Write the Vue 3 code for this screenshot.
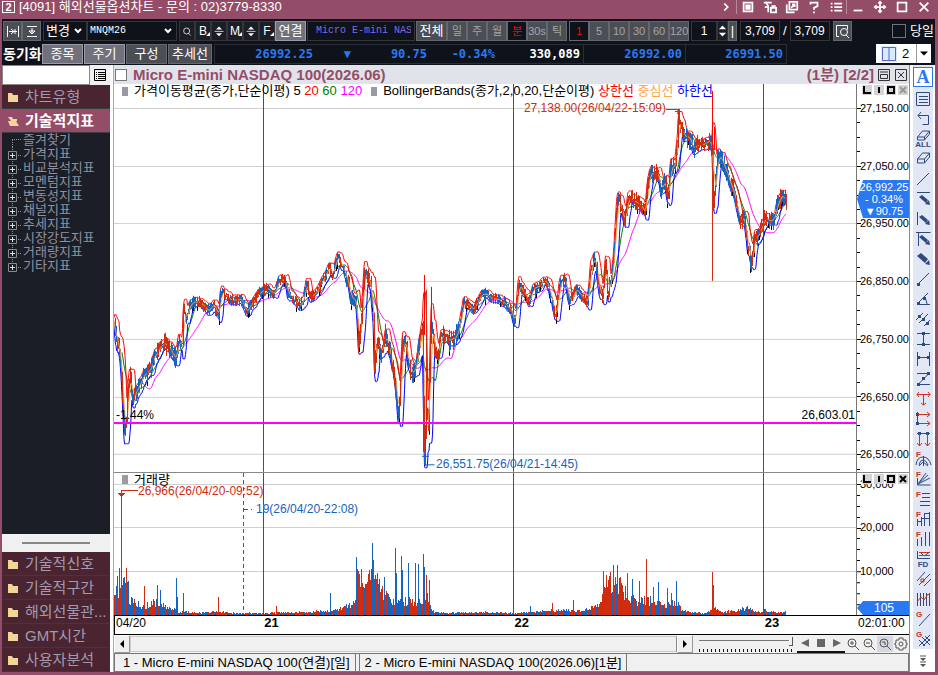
<template>
  <div class="app">
    <header class="titlebar">
      <span class="badge">2</span>
      <h1>[4091] 해외선물옵션차트 - 문의 : 02)3779-8330</h1>
      <div class="window-tools">
        <button v-for="w in windowTools" :key="w.name" :class="{ sep: w.sep }" :aria-label="w.name">
          <svg viewBox="0 0 16 16"><path :d="w.d" /></svg>
        </button>
      </div>
    </header>

    <div class="toolbar">
      <button class="btn w19" aria-label="좁게"><svg viewBox="0 0 16 16"><path d="M2.5 3v11M13.5 3v11M4 8.500h8M6 6l3 2.500l-3 2.500M10 6v5" /></svg></button>
      <button class="btn w19 gap" aria-label="맞춤"><svg viewBox="0 0 16 16"><path d="M3 3.500h10M3 13.500h10M8 5v5M5 8h6l-3 3z" /></svg></button>
      <div class="pick w44">
        <select aria-label="변경"><option>변경</option></select>
        <svg viewBox="0 0 8 6"><path d="M1 1l3 3l3-3" /></svg>
      </div>
      <div class="pick w90 mono gap">
        <select aria-label="종목코드"><option>MNQM26</option></select>
        <svg viewBox="0 0 8 6"><path d="M1 1l3 3l3-3" /></svg>
      </div>
      <button class="dark w16" aria-label="검색"><svg viewBox="0 0 16 16"><path d="M11.500 8a4 4 0 1 1-8 0a4 4 0 1 1 8 0M10 11l3 3" /></svg></button>
      <template v-for="k in ['B', 'M', 'F']" :key="k">
        <button class="dark w16 key">{{ k }}<i></i></button>
        <button v-if="k !== 'F'" class="dark w16" :aria-label="k + ' 조절'"><svg viewBox="0 0 16 16"><path d="M2 8.500h12" /><path class="fill" d="M4 6l4-4l4 4zM4 11l4 4l4-4z" /></svg></button>
      </template>
      <button class="btn on w31">연결</button>
      <input class="name mono" aria-label="종목명" value="Micro E-mini NASDAQ 100(2026.06)" />
      <button class="btn w31 bright">전체</button>
      <div class="group">
        <button v-for="p in periods" :key="p" :class="{ active: p === '분' }">{{ p }}</button>
      </div>
      <div class="group">
        <button v-for="m in minutes" :key="m" :class="{ active: m === 1 }">{{ m }}</button>
      </div>
      <input class="num w26" aria-label="주기 값" value="1" />
      <button class="dark w11" aria-label="증감"><svg viewBox="0 0 10 16"><path class="fill" d="M1 6l4-4l4 4zM1 10l4 4l4-4z" /></svg></button>
      <button class="btn w9">|</button>
      <input class="num w40" aria-label="표시 개수" value="3,709" />
      <span class="slash">/</span>
      <input class="num w40" aria-label="전체 개수" value="3,709" />
      <button class="btn w19" aria-label="데이터 조회"><svg viewBox="0 0 16 16"><path d="M5 13.500h-2.500v-11h11v4M13.500 9a3.500 3.500 0 1 1-7 0a3.500 3.500 0 1 1 7 0M12 12l3 3" /></svg></button>
      <label class="today"><input type="checkbox" />당일</label>
    </div>

    <div class="toolbar second">
      <strong class="sync">동기화</strong>
      <button class="btn on w41">종목</button>
      <button class="btn on w41">주기</button>
      <button class="btn w41">구성</button>
      <button class="btn w44">추세선</button>
      <div class="quotes">
        <span class="q1">26992.25</span>
        <span class="q2">▼</span>
        <span class="q3">90.75</span>
        <span class="q4">-0.34%</span>
        <span class="q5">330,089</span>
        <span class="q6">26992.00</span>
        <span class="q6">26991.50</span>
      </div>
      <div class="layout-pick">
        <svg class="grid-icon" viewBox="0 0 16 16"><path d="M1.500 1.500h13v13h-13zM8 2v12" /></svg>
        <select aria-label="화면 분할"><option>2</option></select>
        <svg class="arrow" viewBox="0 0 8 6"><path d="M0 1h8l-4 4z" /></svg>
      </div>
    </div>

    <main class="body">
      <aside class="sidebar">
        <div class="search">
          <input aria-label="지표 검색" />
          <button aria-label="목록"><svg viewBox="0 0 14 14"><path d="M1.500 1.500h11v11h-11z" /><path stroke-dasharray="1 1 7 9" d="M3 4.500h9M3 6.500h9M3 8.500h9M3 10.500h9" /></svg></button>
        </div>
        <button class="section">
          <svg viewBox="0 0 12 10"><path d="M1 1h4l1 2h5v7h-10z" /></svg>차트유형
        </button>
        <button class="section open">
          <svg viewBox="0 0 12 10"><path d="M1 1h4l1 2h4v2h-6zM1 5h8l3 5h-9z" /></svg>기술적지표
        </button>
        <ul class="tree">
          <li v-for="(t, i) in indicators" :key="t">
            <svg viewBox="0 0 18 14">
              <path class="dots" :d="i === 0 ? 'M7.500 7v7M7 6.500h9' : i === indicators.length - 1 ? 'M7.500 0v3M13 8.500h3' : 'M7.500 0v14M13 8.500h3'" />
              <g v-if="i > 0"><path class="node" d="M3.500 4.500h8v8h-8z" /><path class="plus" d="M5 8.500h5M7.500 6v5" /></g>
            </svg>
            <a href="#">{{ t }}</a>
          </li>
        </ul>
        <div class="splitter"></div>
        <button v-for="s in sections" :key="s" class="section">
          <svg viewBox="0 0 12 10"><path d="M1 1h4l1 2h5v7h-10z" /></svg>{{ s }}
        </button>
      </aside>

      <section class="chart">
        <div class="chart-head">
          <input type="checkbox" aria-label="차트 선택" />
          <h2>Micro E-mini NASDAQ 100(2026.06)</h2>
          <span>(1분) [2/2]</span>
          <button aria-label="창 크기"><svg viewBox="0 0 14 14"><path d="M1.500 1.500h11v11h-11zM3 4h8M3.500 6.500h7v4h-7z" /></svg></button>
          <button aria-label="닫기"><svg viewBox="0 0 14 14"><path d="M1.500 1.500h11v11h-11zM4 4l6 6M10 4l-6 6" /></svg></button>
        </div>

        <div class="pane price">
          <div class="plot">
            <svg viewBox="114 84 742 388" preserveAspectRatio="none">
              <path class="grid" :d="hLines(priceTicks)" />
              <path class="session" d="M263.500 84v388M513.500 84v388M763.500 84v388" />
              <path class="ma120" :d="ma120" />
              <path class="ma60" :d="ma60" />
              <path class="black" :d="candles.wick" />
              <path class="lower" :d="bands.lower" />
              <path class="upper" :d="bands.upper" />
              <path class="up" :d="candles.up" />
              <path class="down" :d="candles.down" />
              <path class="middle" :d="bands.middle" />
              <path class="up" :d="candles.front" />
              <path class="upper" d="M424.500 335v-60M431.500 330v-43M712.500 150V91M714.500 150v-23" />
              <path class="level" d="M114 423h742" />
              <path class="up" d="M666 109.500h12v4M675 111.500h7M677 113.500h3" />
              <path class="down" d="M422 456.500h7M424.500 457v8h10" />
            </svg>
            <div class="legend">
              <i></i><span>가격이동평균(종가,단순이평) 5 <b class="c-red">20</b> <b class="c-green">60</b> <b class="c-pink">120</b></span>
              <i></i><span>BollingerBands(종가,2,0,20,단순이평) <b class="c-red">상한선</b> <b class="c-orange">중심선</b> <b class="c-blue">하한선</b></span>
            </div>
            <span class="note red end" :style="at(666, 108)">27,138.00(26/04/22-15:09)</span>
            <span class="note blue" :style="at(436, 464)">26,551.75(26/04/21-14:45)</span>
            <span class="note" :style="at(116, 415)">-1.44%</span>
            <span class="note end" :style="at(855, 415)">26,603.01</span>
          </div>
          <div class="axis">
            <svg viewBox="0 84 53 388" preserveAspectRatio="none"><path :d="priceMarks" /></svg>
            <span v-for="t in priceTicks" :key="t.label" :style="{ top: ((t.y - 84) / 388) * 100 + '%' }">{{ t.label }}</span>
            <div class="last" :style="{ top: ((199 - 84) / 388) * 100 + '%' }">26,992.25<br />- 0.34%<br />▼90.75</div>
            <div class="pane-tools">
              <button v-for="b in paneTools" :key="b.name" :aria-label="b.name"><svg viewBox="0 0 10 10"><path :d="b.d" :class="{ faded: b.name === '삭제' }" /></svg></button>
            </div>
          </div>
        </div>

        <div class="pane volume">
          <div class="plot">
            <svg viewBox="114 473 742 142" preserveAspectRatio="none">
              <path class="grid" :d="hLines(volumeTicks)" />
              <path class="down" stroke-dasharray="4 3" d="M243.500 473v142M244 509.500h8" />
              <path class="down" :d="volumes.down" />
              <path class="up" :d="volumes.up" />
              <path class="session" d="M263.500 473v142M513.500 473v142M763.500 473v142" />
              <path class="up" d="M121.500 494v-4h16M118 493.500h7M119 494.500h5M120 495.500h3" />
            </svg>
            <div class="legend"><i></i><span>거래량</span></div>
            <span class="note red" :style="atVol(138, 491)">26,966(26/04/20-09:52)</span>
            <span class="note blue" :style="atVol(256, 509)">19(26/04/20-22:08)</span>
          </div>
          <div class="axis">
            <svg viewBox="0 473 53 142" preserveAspectRatio="none"><path :d="volumeMarks" /></svg>
            <span v-for="t in volumeTicks" :key="t.label" :style="{ top: ((t.y - 473) / 142) * 100 + '%' }">{{ t.label }}</span>
            <div class="last small" :style="{ top: ((608 - 473) / 142) * 100 + '%' }">105</div>
            <div class="pane-tools">
              <button v-for="b in paneTools" :key="b.name" :aria-label="b.name"><svg viewBox="0 0 10 10"><path :d="b.d" /></svg></button>
            </div>
          </div>
        </div>

        <div class="times">
          <div class="plot">
            <span v-for="d in days" :key="d.label" :class="{ day: d.day }" :style="{ left: ((d.x - 114) / 742) * 100 + '%' }">{{ d.label }}</span>
          </div>
          <span class="clock">02:01:00</span>
        </div>

        <div class="scroll">
          <button class="step" aria-label="이전"><svg viewBox="0 0 8 8"><path d="M6 0v8l-4-4z" /></svg></button>
          <div class="track"></div>
          <button class="step" aria-label="다음"><svg viewBox="0 0 8 8"><path d="M2 0v8l4-4z" /></svg></button>
          <input type="range" aria-label="확대 비율" min="0" max="100" value="100" />
          <div class="play">
            <button aria-label="뒤로"><svg viewBox="0 0 10 10"><path d="M9 1v8l-8-4z" /></svg></button>
            <button aria-label="정지"><svg viewBox="0 0 10 10"><path d="M1 1h8v8h-8z" /></svg></button>
            <button aria-label="앞으로"><svg viewBox="0 0 10 10"><path d="M1 1v8l8-4z" /></svg></button>
          </div>
          <button v-for="z in zooms" :key="z.name" class="zoom" :class="{ held: z.held }" :aria-label="z.name"><svg viewBox="0 0 14 14"><path :d="z.d" /></svg></button>
        </div>

        <nav class="tabs">
          <button>1 - Micro E-mini NASDAQ 100(연결)[일]</button>
          <button class="current">2 - Micro E-mini NASDAQ 100(2026.06)[1분]</button>
        </nav>
      </section>

      <nav class="drawing">
        <button class="text-tool" aria-label="텍스트"><svg viewBox="0 0 20 20"><text x="10" y="17" text-anchor="middle">A</text></svg></button>
        <button v-for="t in tools" :key="t.name" :aria-label="t.name">
          <svg viewBox="0 0 20 20">
            <path v-if="t.d" :d="t.d" />
            <path v-if="t.fill" class="fill" :d="t.fill" />
            <path v-if="t.red" class="red" :d="t.red" />
            <text v-if="t.mark" x="3" y="8">{{ t.mark }}</text>
            <text v-if="t.sub" class="sub" x="10" y="18" text-anchor="middle">{{ t.sub }}</text>
          </svg>
        </button>
        <button class="more" aria-label="더보기"><svg viewBox="0 0 20 20"><path d="M7 5h6M7 11h6" /><path class="fill" d="M7 7h6l-3 3zM7 13h6l-3 3z" /></svg></button>
      </nav>
    </main>
  </div>
</template>

<script setup>
import { computed } from "vue";

const windowTools = [
  { name: "펼치기", sep: true, d: "M6 4l4 4l-4 4" },
  { name: "캡처", d: "M3 3h10v10h-10zM6 6h4v4h-4zM7 8h2" },
  { name: "고정", d: "M1 3h9M3 2l3 5v7M2 8h5M9 9h6v5h-6zM10.500 9v-2h3v2" },
  { name: "새창", d: "M5 2h9v9h-9zM2 5v9h9M7 9l4-4M8 5h3v3" },
  { name: "도움말", d: "M4 5v-2h8v4l-4 2v2M8 13v2" },
  { name: "메뉴", sep: true, d: "M2 4h2M2 8h2M2 12h2M6 4h9M6 8h9M6 12h9" },
  { name: "최소화", d: "M3 12h10" },
  { name: "이동", d: "M8 2v12M2 8h12M6 4l2-2l2 2M6 12l2 2l2-2M4 6l-2 2l2 2M12 6l2 2l-2 2" },
  { name: "최대화", d: "M3 3h10v10h-10z" },
  { name: "닫기", d: "M3 3l10 10M13 3l-10 10" },
];
const periods = ["일", "주", "월", "분", "30s", "틱"];
const minutes = [1, 5, 10, 30, 60, 120];
const indicators = ["즐겨찾기", "가격지표", "비교분석지표", "모멘텀지표", "변동성지표", "채널지표", "추세지표", "시장강도지표", "거래량지표", "기타지표"];
const sections = ["기술적신호", "기술적구간", "해외선물관...", "GMT시간", "사용자분석"];
const paneTools = [
  { name: "최소", d: "M2 1v7h7" },
  { name: "분할", d: "M5 2v6" },
  { name: "최대", d: "M2 2h6v6h-6z" },
  { name: "삭제", d: "M2 2l6 6M8 2l-6 6" },
];
const lens = "M10 6a4 4 0 1 1-8 0a4 4 0 1 1 8 0M9 9l4 4";
const zooms = [
  { name: "확대", d: lens + "M4 6h4M6 4v4" },
  { name: "축소", d: lens + "M4 6h4" },
  { name: "영역", d: lens + "M4 5h3v3", held: true },
  { name: "설정", d: "M9 7a2 2 0 1 1-4 0a2 2 0 1 1 4 0M5 1h4v2h3v3h1v2h-1v3h-3v2h-4v-2h-3v-3h-1v-2h1v-3h3z" },
];

const dot = (x, y) => `M${x - 1} ${y - 1}h3v3h-3z`;
const pencil = "M6 8l3-2l6 5l-2 3zM12 15l4-4l1 5z";
const tools = [
  { name: "메모", d: "M3.500 3.500h13v13h-13zM6 7.500h9M6 10.500h9M6 13.500h9" },
  { name: "되돌리기", d: "M8 3l-3 3.500l3 3.500M5 6.500h10.500v9h-6" },
  { name: "전체 지우기", d: "M4.500 8l5-6h7l-5 6zM4.500 8v3h7v-3M11.500 11l5-6v-3", sub: "ALL" },
  { name: "지우기", d: "M4.500 10l5-6h7l-5 6zM4.500 10v4h7v-4M11.500 14l5-6v-4" },
  { name: "추세선", d: "M4 16l12-12" },
  { name: "수평선", d: "M4 3.500h13", fill: pencil },
  { name: "수직선", d: "M4.500 3v13", fill: pencil },
  { name: "십자선", d: "M5.500 17v-13.500h12M3 3.500h3", fill: pencil },
  { name: "자유선", fill: "M4 7l4-3l7 6l-3 4zM12 15l4-4l1 5z" },
  { name: "선분", d: "M5 15l11-11", fill: dot(5, 15) },
  { name: "각도", d: "M4 15.500h13M4 15l11-11M10 8q4 2 4 7", fill: dot(5, 14) + dot(11, 9) },
  { name: "평행선", d: "M3 11l7-7M6 14l9-9M11 17l6-6", fill: dot(6, 7) + dot(10, 10) + dot(14, 14) },
  { name: "세로 범위", d: "M4 4.500h13M4 15.500h13M10.500 4v11", fill: dot(10, 4) + dot(10, 15) },
  { name: "가로 범위", d: "M4.500 3v14M16.500 3v14M4 8.500h12", fill: dot(5, 8) + dot(15, 8) },
  { name: "지그재그", d: "M4 4.500h12l-11 11h12", fill: dot(15, 4) + dot(10, 9) + dot(5, 15) },
  { name: "가격 측정", red: "M4 5.500h13M6 3l-2 2.500l2 2.500M15 3l2 2.500l-2 2.500M10.500 5v11M8 14l2.500 2l2.500-2" },
  { name: "가격 목표", d: "M4.500 3v13", red: "M5 5.500h12M5 14.500h12M14 3l3 2.500l-3 2.500M14 12l3 2.500l-3 2.500", fill: dot(4, 5) + dot(4, 14) },
  { name: "시간 목표", d: "M4 4.500h13", red: "M6.500 4v13M14.500 4v13M4 14l2.500 3l2.500-3M12 14l2.500 3l2.500-3", fill: dot(6, 4) + dot(14, 4) },
  { name: "피보나치 아크", mark: "F", d: "M3 16q1-8 7-8t8 8M6 16q1-5 4-5t5 5M10.500 7v10M10 13l-4 4M10 13l5 4" },
  { name: "피보나치 팬", mark: "F", d: "M4.500 9v7h13M5 15l12-6M5 15l8-11M5 15l10-9" },
  { name: "피보나치 되돌림", mark: "F", d: "M9 4.500h8M9 8.500h8M7 12.500h10M7 16.500h10" },
  { name: "피보나치 확장", mark: "F", d: "M4.500 10v7M8.500 8v9M4 12.500h4M11.500 4v13M8 9.500h8M16.500 3v14M11 4.500h5" },
  { name: "피보나치 시간", mark: "F", d: "M4.500 10v7M8.500 8v9M12.500 3v14M16.500 3v14" },
  { name: "피보나치 목표", d: "M4.500 2v8M4 9.500h13M7 3l4 4l6-4", red: "M6 3.500h11M6 6.500h11", sub: "FD" },
  { name: "회귀 채널", d: "M4 12l8-9M6 16l11-11M11 17l7-7", red: "M8 10h3v3h-3z" },
  { name: "주기선", d: "M4.500 4v13M7.500 4v13M10.500 4v13M13.500 4v13M16.500 4v13", red: "M4 13l4-5l3 3l4-6l2 2" },
  { name: "갠 라인", mark: "G", d: "M6 17l11-12" },
  { name: "갠 그리드", mark: "G", d: "M6 17l11-11M10 17l7-7M9 8l8 8M12 7l5 5M6 11l6 6" },
];

const priceTicks = ["27,150.00", "27,050.00", "26,950.00", "26,850.00", "26,750.00", "26,650.00", "26,550.00"].map(
  (label, i) => ({ label, y: 108 + Math.round(i * 57.7) })
);
const volumeTicks = [
  { label: "30,000", y: 484 },
  { label: "20,000", y: 527 },
  { label: "10,000", y: 571 },
];
const days = [
  { label: "04/20", x: 115 },
  { label: "21", x: 263, day: true },
  { label: "22", x: 513, day: true },
  { label: "23", x: 763, day: true },
];

const hLines = (ticks) => ticks.map((t) => `M114 ${t.y + 0.5}h742`).join("");
const marks = (from, to, step, minor) => {
  let d = "";
  for (let y = from, i = 0; y < to; y += step, i++) d += `M0 ${Math.round(y) + 0.5}h${i % minor ? 3 : 4}`;
  return d;
};
const priceMarks = marks(108, 470, 14.42, 4);
const volumeMarks = marks(484, 612, 10.9, 4);
const at = (x, y) => ({ left: ((x - 114) / 742) * 100 + "%", top: ((y - 84) / 388) * 100 + "%" });
const atVol = (x, y) => ({ left: ((x - 114) / 742) * 100 + "%", top: ((y - 473) / 142) * 100 + "%" });

// small seeded generator so every load draws the same bars
const seeded = (s) => () => {
  s = (s * 1664525 + 1013904223) % 4294967296;
  return s / 4294967296;
};
const interpolate = (points, x) => {
  let i = 1;
  while (i < points.length - 1 && points[i][0] < x) i++;
  const [x0, y0] = points[i - 1];
  const [x1, y1] = points[i];
  return y0 + ((y1 - y0) * Math.min(1, Math.max(0, (x - x0) / (x1 - x0))));
};

const trend = [
  [114, 322], [116, 342], [119, 350], [121, 375], [123, 415], [124, 436], [126, 420], [127, 396], [130, 376], [132, 400],
  [137, 388], [141, 380], [146, 372], [150, 368], [153, 358], [157, 352], [160, 346], [165, 344], [170, 350], [175, 358],
  [178, 340], [182, 345], [183, 308], [185, 320], [189, 306], [193, 302], [200, 303], [207, 311], [213, 305], [218, 316],
  [220, 293], [225, 295], [230, 300], [240, 299], [246, 312], [252, 302], [258, 294], [266, 288], [274, 294], [279, 279],
  [285, 282], [287, 294], [293, 300], [299, 306], [303, 299], [306, 282], [309, 298], [316, 292], [322, 280], [329, 268],
  [332, 275], [337, 255], [341, 265], [345, 274], [350, 294], [356, 305], [358, 346], [361, 318], [364, 272], [370, 285],
  [373, 320], [374, 370], [377, 338], [380, 355], [385, 335], [389, 352], [394, 375], [398, 418], [402, 345], [405, 340],
  [408, 365], [412, 376], [415, 368], [419, 342], [422, 325], [423, 400], [424, 452], [426, 415], [428, 422], [430, 340],
  [431, 325], [434, 350], [437, 355], [441, 336], [448, 340], [455, 338], [459, 325], [463, 302], [468, 305], [472, 310],
  [477, 303], [480, 295], [486, 294], [492, 300], [497, 299], [503, 303], [510, 308], [514, 323], [518, 285], [522, 290],
  [528, 303], [533, 288], [538, 287], [543, 279], [548, 287], [552, 304], [555, 318], [559, 285], [564, 278], [569, 304],
  [575, 290], [580, 295], [587, 303], [590, 270], [594, 257], [599, 290], [602, 297], [605, 262], [607, 292], [610, 285],
  [613, 258], [616, 215], [618, 196], [620, 205], [624, 222], [628, 198], [633, 200], [640, 206], [644, 215], [648, 180],
  [650, 172], [653, 175], [657, 174], [660, 190], [665, 182], [667, 200], [670, 168], [674, 164], [677, 142], [678, 120],
  [681, 128], [684, 140], [688, 136], [692, 148], [697, 145], [704, 143], [709, 140], [712, 150], [713, 205], [715, 178],
  [717, 158], [720, 157], [724, 168], [730, 185], [735, 200], [738, 218], [744, 220], [747, 245], [751, 262], [754, 240],
  [758, 234], [762, 225], [766, 216], [770, 224], [774, 216], [777, 200], [781, 195], [786, 200],
];
const isLively = (x) => x < 180 || (x > 345 && x < 460) || x > 590;
const noise = seeded(7);
const closes = [];
for (let x = 114; x <= 786; x += 0.5) {
  closes.push({ x, y: interpolate(trend, x) + (noise() - 0.5) * (isLively(x) ? 8 : 5) });
}

const average = (i, n) => {
  const from = Math.max(0, i - n + 1);
  let sum = 0;
  for (let k = from; k <= i; k++) sum += closes[k].y;
  return sum / (i - from + 1);
};
const toPath = (list) => "M" + list.map(([x, y]) => `${x} ${y.toFixed(1)}`).join("L");
const ma60 = computed(() => toPath(closes.map((c, i) => [c.x, average(i, 26)]).slice(16)));
const ma120 = computed(() => toPath(closes.map((c, i) => [c.x, average(i, 58)]).slice(56)));

const bands = computed(() => {
  const upper = [], middle = [], lower = [];
  closes.forEach((c, i) => {
    const m = average(i, 8);
    let v = 0, n = 0;
    for (let k = Math.max(0, i - 7); k <= i; k++, n++) v += (closes[k].y - m) ** 2;
    const w = 1.6 * Math.sqrt(v / n);
    upper.push([c.x, Math.max(92, m - w - 2)]);
    middle.push([c.x, m]);
    lower.push([c.x, Math.min(468, m + w + 2)]);
  });
  // bands hold their level for a few bars, which gives them flat steps
  const hold = (list, pick) => list.map(([x], i) => [x, pick(...list.slice(Math.max(0, i - 3), i + 1).map((p) => p[1]))]);
  return { upper: toPath(hold(upper, Math.min)), middle: toPath(middle), lower: toPath(hold(lower, Math.max)) };
});

const candles = computed(() => {
  const rnd = seeded(21);
  let up = "", down = "", wick = "", front = "";
  let run = 0, rising = true;
  for (let i = 2; i < closes.length; i += 2) {
    if (run-- <= 0) {
      run = Math.floor(rnd() * 3);
      rising = rnd() > 0.48;
    }
    const { x } = closes[i];
    const reach = isLively(x) ? 8 : 5;
    const ys = [closes[i - 2].y, closes[i - 1].y, closes[i].y];
    const top = Math.round(Math.min(...ys) - rnd() * reach);
    const bottom = Math.round(Math.max(...ys) + rnd() * reach);
    const seg = `M${Math.floor(x) + 0.5} ${top}V${bottom}`;
    if (rising) up += seg;
    else down += seg;
    if (rising && rnd() > 0.5) front += seg;
    if (rnd() > 0.9) wick += `M${Math.floor(x) + 0.5} ${top}V${bottom + 4}`;
  }
  // the wide spikes
  up += "M712.500 150V281M678.500 114V135M426.500 290V430";
  down += "M423.500 330V452M425.500 425V466";
  return { up, down, wick, front };
});

const volumeLevel = [
  [114, 26], [119, 26], [122, 32], [127, 26], [129, 14], [136, 13], [145, 9], [152, 13], [158, 12], [168, 8], [172, 7],
  [177, 10], [178, 2], [183, 4], [188, 3], [200, 2], [216, 4], [230, 2], [263, 2], [300, 3], [330, 4], [345, 8], [355, 12],
  [356, 36], [365, 30], [372, 38], [382, 24], [392, 15], [408, 14], [420, 12], [425, 24], [430, 8], [434, 3], [445, 2],
  [480, 3], [513, 2], [535, 3], [560, 5], [580, 4], [592, 8], [600, 11], [605, 26], [612, 34], [620, 28], [630, 16],
  [640, 15], [655, 15], [663, 8], [672, 13], [677, 12], [681, 5], [690, 3], [706, 2], [710, 5], [714, 8], [720, 3],
  [732, 4], [745, 7], [757, 3], [765, 5], [775, 3], [786, 3],
];
const peaks = {
  117: [39, 1], 119: [47, 0], 121: [122, 0], 126: [47, 1], 128: [34, 0], 144: [29, 1], 157: [30, 0], 160: [25, 0],
  176: [37, 0], 177: [18, 0], 183: [22, 1], 218: [18, 1], 276: [9, 1], 330: [22, 0], 356: [58, 0], 357: [46, 0],
  361: [46, 1], 369: [45, 1], 372: [72, 0], 373: [55, 1], 377: [42, 1], 384: [38, 0], 395: [67, 0], 396: [42, 0],
  401: [59, 0], 402: [45, 0], 408: [52, 0], 415: [52, 1], 418: [51, 0], 423: [61, 0], 424: [48, 0], 426: [40, 1],
  429: [35, 1], 530: [9, 0], 552: [12, 1], 573: [15, 0], 603: [44, 1], 606: [40, 1], 610: [43, 0], 613: [50, 1],
  617: [50, 1], 620: [38, 0], 627: [42, 1], 632: [36, 0], 639: [34, 1], 646: [56, 1], 653: [28, 1], 658: [33, 0],
  667: [27, 0], 671: [22, 1], 676: [34, 0], 712: [43, 1], 713: [30, 1], 747: [9, 0],
};
const volumes = computed(() => {
  const rnd = seeded(5);
  let up = "", down = "";
  for (let x = 114; x <= 785; x++) {
    let h = Math.max(1, Math.round(interpolate(volumeLevel, x) * (0.6 + rnd() * 0.7)));
    let rising = rnd() > 0.5;
    if (peaks[x]) {
      h = peaks[x][0];
      rising = !!peaks[x][1];
    }
    // the heavy session early on the 22nd closes mostly higher
    if (x > 600 && x < 625) rising = rising || rnd() > 0.4;
    const seg = `M${x + 0.5} 615v-${h}`;
    if (rising) up += seg;
    else down += seg;
  }
  return { up, down };
});
</script>

<style>
body {
  overflow: hidden;
}
</style>

<style scoped>
.app {
  box-sizing: border-box;
  height: 100vh;
  display: flex;
  flex-direction: column;
  padding: 0 3px 3px 2px;
  background: #944d68;
  font-family: "Liberation Sans", "Noto Sans CJK KR", sans-serif;
  font-size: 13px;
  line-height: 14px;
  color: #000;
}
.app *,
.app *::before {
  box-sizing: border-box;
}
button,
input,
select {
  margin: 0;
  padding: 0;
  border: 0;
  border-radius: 0;
  background: none;
  font: inherit;
  color: inherit;
  white-space: nowrap;
}
svg {
  display: block;
  fill: none;
  stroke: currentColor;
}
svg .fill {
  fill: currentColor;
  stroke: none;
}
h1,
h2,
ul {
  margin: 0;
  padding: 0;
  font: inherit;
  list-style: none;
}
.titlebar {
  display: flex;
  align-items: center;
  height: 19px;
  flex: none;
  color: #fff;
  padding-bottom: 5px;
}
.badge {
  width: 13px;
  height: 12px;
  border: 1px solid #fff;
  font-size: 11px;
  font-weight: bold;
  line-height: 10px;
  text-align: center;
  margin-right: 4px;
}
.window-tools {
  margin-left: auto;
  display: flex;
}
.window-tools button {
  width: 22px;
  height: 14px;
  display: flex;
  align-items: center;
  justify-content: center;
}
.window-tools .sep {
  border-right: 1px solid #b98a9c;
}
.window-tools svg {
  width: 14px;
  height: 14px;
  stroke-width: 2;
}
.toolbar {
  display: flex;
  align-items: center;
  height: 23px;
  flex: none;
  background: #0e131b;
  color: #fff;
  padding: 0 1px;
}
.toolbar svg {
  width: 16px;
  height: 16px;
  margin: auto;
}
.toolbar .dark svg {
  width: 12px;
}
.toolbar .w11 svg {
  width: 9px;
}
.btn,
.dark {
  height: 20px;
  flex: none;
  text-align: center;
  background: #4b4e54;
  border: 1px solid #65686e;
}
.dark {
  background: #1b1e27;
  border-color: #363636;
}
.btn.on {
  background: #70717c;
  border-color: #9a9ba8;
}
.gap {
  margin-right: 2px;
}
.w9 { width: 9px; }
.w11 { width: 11px; }
.w16 { width: 16px; }
.w19 { width: 19px; }
.w26 { width: 26px; }
.w31 { width: 31px; }
.w40 { width: 40px; }
.w41 { width: 41px; }
.w44 { width: 44px; }
.w90 { width: 90px; }
.key {
  position: relative;
  font-size: 12px;
}
.key i {
  position: absolute;
  right: 0;
  bottom: 4px;
  border: 2px solid #fff;
  border-top-color: transparent;
  border-left-color: transparent;
}
.mono {
  font-family: "Liberation Mono", monospace;
  font-size: 10px;
}
.pick {
  display: flex;
  align-items: center;
  height: 20px;
  flex: none;
  border: 1px solid #363636;
  padding: 0 4px 0 2px;
}
select {
  appearance: none;
  flex: 1;
  min-width: 0;
}
.toolbar .pick svg {
  width: 8px;
  height: 6px;
  margin: 0;
  stroke-width: 2;
}
.name {
  width: 108px;
  height: 20px;
  margin: 0 1px;
  padding: 0 3px 0 8px;
  border: 1px solid #363636;
  color: #7d6be0;
}
.group {
  display: flex;
  margin-right: 2px;
}
.group button {
  width: 20px;
  height: 20px;
  background: #4b4e54;
  border: 1px solid #65686e;
  color: #a3a5a8;
  font-size: 11px;
}
.group .active {
  background: #0e131b;
  color: #f00;
}
.num {
  height: 20px;
  border: 1px solid #363636;
  text-align: center;
  font-size: 12px;
}
.slash {
  padding: 0 3px;
}
.w9 + .num {
  margin-left: 3px;
}
.num + .btn {
  margin-left: 3px;
}
.today {
  display: flex;
  align-items: center;
  gap: 4px;
  margin-left: auto;
}
.today input {
  appearance: none;
  width: 14px;
  height: 14px;
  border: 1px solid #70717c;
}
.sync {
  width: 39px;
  font-size: 14px;
  white-space: nowrap;
}
.second .btn {
  margin-right: 1px;
}
.quotes {
  display: flex;
  height: 20px;
  margin-left: 1px;
  border: 1px solid #2b2e37;
  font: bold 12px/18px "DejaVu Sans Mono", monospace;
  text-align: right;
  color: #2979f2;
}
.q1 { width: 98px; }
.q2 { width: 38px; }
.q3 { width: 76px; }
.q4 { width: 68px; }
.q5 { width: 89px; color: #fff; padding-right: 3px; border-right: 1px solid #2b2e37; }
.q6 { width: 101px; padding-right: 3px; }
.q6 + .q6 { border-left: 1px solid #2b2e37; }
.layout-pick {
  display: flex;
  align-items: center;
  width: 55px;
  height: 19px;
  margin-left: auto;
  margin-right: 3px;
  background: #fff;
  color: #000;
}
.layout-pick .grid-icon {
  margin: 0 5px;
  color: #5b66c8;
  background: #d7ecfb;
}
.toolbar .arrow {
  width: 15px;
  height: 19px;
  padding: 3px;
  margin: 0;
  border-left: 1px solid #999;
  fill: #000;
  stroke: none;
}
.body {
  flex: 1;
  min-height: 0;
  display: flex;
  background: #fff;
}
.sidebar {
  width: 109px;
  flex: none;
  display: flex;
  flex-direction: column;
  padding-right: 1px;
}
.search {
  display: flex;
  height: 20px;
  background: #f0f0f0;
}
.search input {
  flex: 1;
  min-width: 0;
  border: 1px solid #888;
  background: #fff;
}
.search button {
  width: 20px;
}
.search svg {
  width: 14px;
  height: 14px;
  margin: auto;
}
.section {
  display: flex;
  align-items: center;
  gap: 6px;
  height: 24px;
  flex: none;
  padding-left: 5px;
  background: #4a2430;
  border-bottom: 1px solid #3a3c3c;
  color: #a29bae;
  font-size: 15px;
}
.section svg {
  width: 12px;
  height: 10px;
  fill: #f2d699;
  stroke: none;
}
.section.open {
  background: #944d68;
  color: #fff;
  font-weight: bold;
}
.tree {
  flex: 1;
  background: #1b1e27;
  color: #8f91a0;
  min-height: 0;
}
.tree li {
  display: flex;
  height: 14px;
  padding-left: 3px;
}
.tree svg {
  width: 18px;
  height: 14px;
}
.tree a {
  color: inherit;
  text-decoration: none;
}
.dots {
  stroke-dasharray: 1 1;
}
.node {
  stroke: #8a8a8a;
}
.plus {
  stroke: #ddd;
}
.splitter {
  height: 18px;
  padding: 8px 20px;
  background: #f0f0f0;
}
.splitter::before {
  content: "";
  display: block;
  height: 2px;
  background: #888;
}
.chart {
  flex: 1;
  min-width: 0;
  display: flex;
  flex-direction: column;
  margin-left: 2px;
  border-left: 1px solid #aaa;
  border-right: 1px solid #888;
}
.chart-head {
  display: flex;
  align-items: center;
  height: 19px;
  flex: none;
  gap: 3px;
  padding: 0 1px;
  background: #e1e3ea;
  color: #944d68;
}
.chart-head input {
  appearance: none;
  width: 12px;
  height: 12px;
  background: #fff;
  border: 1px solid #777;
  margin-right: 3px;
}
.chart-head h2 {
  font-size: 15px;
  font-weight: bold;
  white-space: nowrap;
}
.chart-head span {
  margin-left: auto;
  font-size: 15px;
  font-weight: bold;
}
.chart-head button {
  width: 14px;
  height: 14px;
  color: #333;
}
.pane {
  display: flex;
  min-height: 0;
}
.price {
  flex: 30 1 0;
}
.volume {
  flex: 11 1 0;
  border-top: 1px solid #888;
}
.plot {
  position: relative;
  flex: 1;
  min-width: 0;
}
.pane .plot > svg,
.axis > svg {
  position: absolute;
  inset: 0;
  width: 100%;
  height: 100%;
  shape-rendering: crispEdges;
}
.grid { stroke: #d0d0d0; }
.session { stroke: #dd1111; }
.ma120 { stroke: #f0f; }
.ma60 { stroke: #008000; }
.black { stroke: #000; }
.lower { stroke: #00f; }
.upper { stroke: #f00; }
.middle { stroke: #ffa64d; }
.up { stroke: #d02c10; }
.down { stroke: #1464c0; }
.level { stroke: #f0f; stroke-width: 2; }
.legend {
  position: relative;
  display: flex;
  align-items: center;
  height: 14px;
  padding-left: 8px;
  white-space: nowrap;
}
.legend i {
  width: 6px;
  height: 9px;
  margin-right: 6px;
  background: #999aa3;
}
.legend span {
  margin-right: 9px;
}
.legend b {
  font-weight: normal;
}
.c-red { color: #f00; }
.c-green { color: #008000; }
.c-pink { color: #f0f; }
.c-orange { color: #ffa64d; }
.c-blue { color: #00f; }
.note {
  position: absolute;
  transform: translateY(-50%);
  font-size: 12px;
  white-space: nowrap;
}
.note.end {
  transform: translate(-100%, -50%);
}
.note.red { color: #d02c10; }
.note.blue { color: #1464c0; }
.axis {
  position: relative;
  width: 53px;
  flex: none;
  border-left: 1px solid #777;
  font-size: 11px;
}
.axis span {
  position: absolute;
  left: 3px;
  transform: translateY(-50%);
}
.last {
  position: absolute;
  left: 0;
  right: 0;
  transform: translateY(-50%);
  padding: 1px 0 1px 2px;
  background: #2979f2;
  clip-path: polygon(0 50%, 6px 0, 100% 0, 100% 100%, 6px 100%);
  color: #fff;
  line-height: 12px;
  text-align: center;
  white-space: nowrap;
}
.last.small {
  font-size: 12px;
}
.pane-tools {
  position: absolute;
  top: 1px;
  right: 1px;
  display: flex;
  gap: 2px;
}
.pane-tools button {
  width: 10px;
  height: 10px;
  background: #d4d4d4;
}
.pane-tools svg {
  width: 10px;
  height: 10px;
  stroke-width: 2;
}
.faded {
  stroke: #999;
}
.times {
  display: flex;
  height: 20px;
  flex: none;
  border-top: 1px solid #000;
  border-bottom: 1px solid #000;
  border-left: 1px solid #000;
  font-size: 12px;
}
.times .plot span {
  position: absolute;
  top: 0;
}
.times .plot .day {
  font-size: 13px;
  font-weight: bold;
}
.clock {
  width: 50px;
  margin-right: 1px;
}
.scroll {
  display: flex;
  align-items: center;
  height: 18px;
  flex: none;
  background: #f0f0f0;
}
.step {
  width: 16px;
  height: 18px;
  border: 1px solid #999;
  border-top-color: #fff;
  border-left-color: #fff;
}
.step svg {
  width: 8px;
  height: 8px;
  margin: auto;
  fill: #000;
  stroke: none;
}
.track {
  flex: 1;
  height: 16px;
  border: 1px solid #ccc;
  border-right-color: #888;
}
.scroll input {
  appearance: none;
  width: 94px;
  height: 16px;
  margin: 0 4px 0 6px;
  background: linear-gradient(#777, #777) 0 4px / 100% 1px no-repeat,
    repeating-linear-gradient(90deg, #111 0 1px, transparent 1px 4px) 0 100% / 100% 3px no-repeat;
}
.scroll input::-webkit-slider-thumb {
  appearance: none;
  width: 4px;
  height: 9px;
  margin-top: -5px;
  background: #f0f0f0;
  border-right: 1px solid #555;
  border-bottom: 1px solid #555;
}
.play {
  display: flex;
  height: 18px;
  border-bottom: 2px solid #111;
}
.play button {
  width: 16px;
}
.play svg {
  width: 10px;
  height: 10px;
  margin: auto;
  fill: #666;
  stroke: none;
}
.zoom {
  width: 16px;
  height: 16px;
  color: #555;
}
.zoom svg {
  width: 14px;
  height: 14px;
  margin: auto;
}
.held {
  background: #d5d8e0;
}
.tabs {
  display: flex;
  height: 19px;
  flex: none;
  padding-left: 3px;
  border: 1px solid #777;
  background: #f0f0f0;
}
.tabs button {
  padding: 0 5px;
  border-right: 1px solid #777;
}
.tabs .current {
  margin-left: 3px;
  border-left: 1px solid #777;
}
.drawing {
  width: 20px;
  flex: none;
  display: flex;
  flex-direction: column;
  margin: 0 2px 0 3px;
  padding-top: 2px;
  color: #2f4a80;
  background: #e1e7f4;
}
.drawing button {
  height: 20px;
  flex: none;
}
.drawing svg {
  width: 20px;
  height: 20px;
}
.drawing .red {
  stroke: #d2301a;
}
.drawing text {
  fill: #d2301a;
  stroke: none;
  font: bold 8px "Liberation Sans", sans-serif;
}
.drawing .sub {
  fill: #2f4a80;
}
.drawing .text-tool {
  margin-bottom: 2px;
  border: 1px solid #2979f2;
  background: #fff;
}
.drawing .text-tool svg {
  width: 18px;
  height: 18px;
}
.drawing .text-tool text {
  fill: #2979f2;
  font: bold 20px "Liberation Serif", serif;
}
.drawing .more {
  flex: 1;
  background: #fff;
  color: #555;
}
</style>
